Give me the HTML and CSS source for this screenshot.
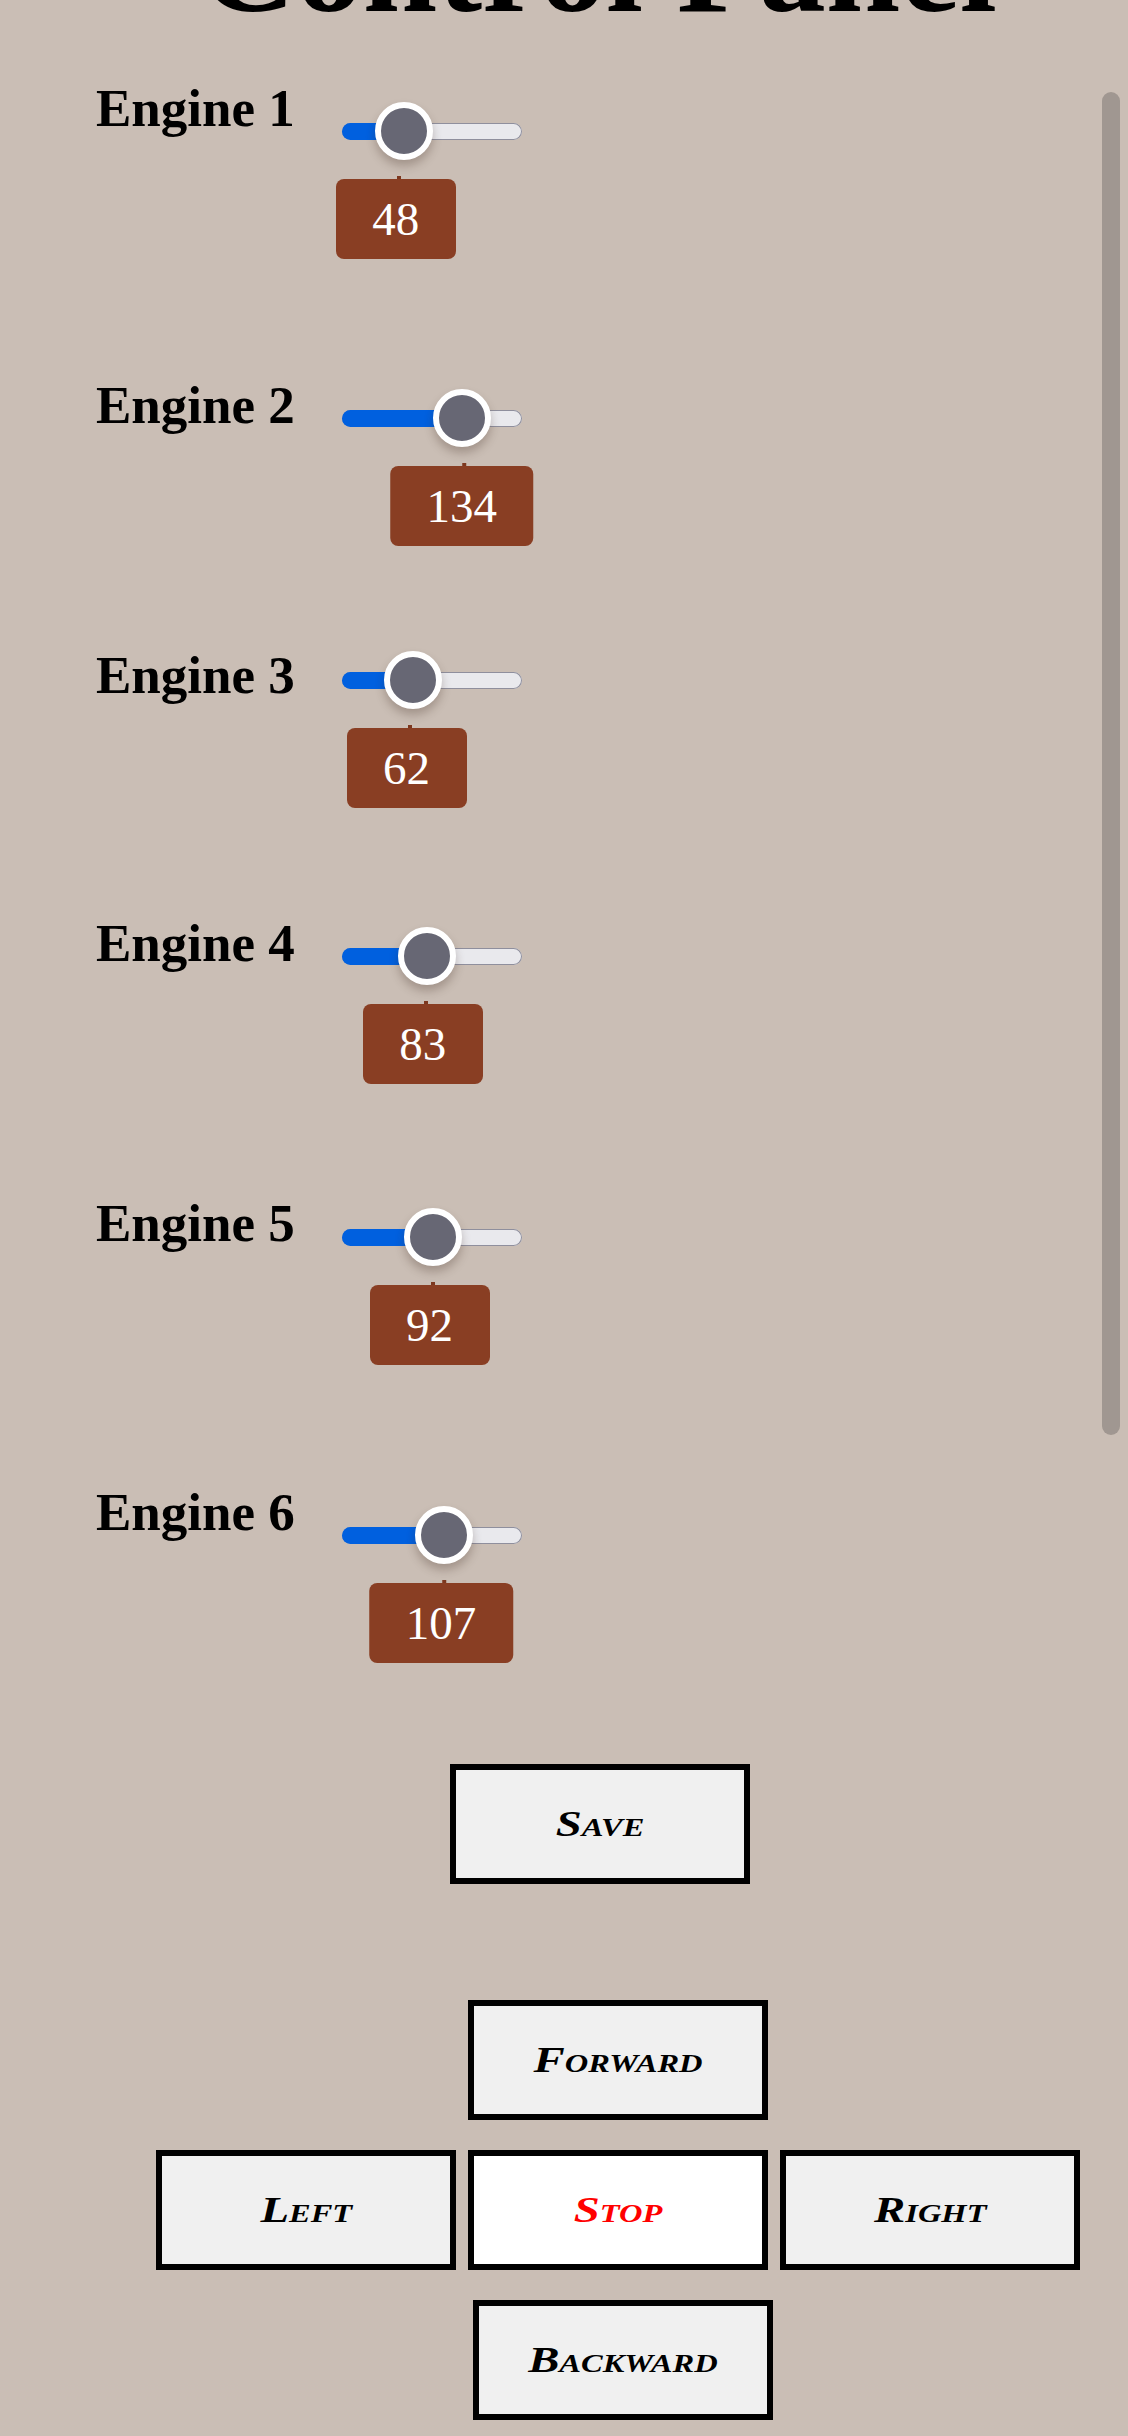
FILE: index.html
```html
<!DOCTYPE html>
<html lang="en">
<head>
<meta charset="utf-8">
<title>Control Panel</title>
<link rel="stylesheet" href="styles.css">
</head>
<body>
<h1 class="title">Control Panel</h1>

<section class="engines">
  <div class="engine">
    <h2 class="engine-label">Engine 1</h2>
    <div class="control" style="--p:0.2667">
      <div class="slider"><div class="track"><div class="fill"></div></div><div class="thumb"></div></div>
      <output class="bubble">48</output>
    </div>
  </div>
  <div class="engine">
    <h2 class="engine-label">Engine 2</h2>
    <div class="control" style="--p:0.7444">
      <div class="slider"><div class="track"><div class="fill"></div></div><div class="thumb"></div></div>
      <output class="bubble">134</output>
    </div>
  </div>
  <div class="engine">
    <h2 class="engine-label">Engine 3</h2>
    <div class="control" style="--p:0.3444">
      <div class="slider"><div class="track"><div class="fill"></div></div><div class="thumb"></div></div>
      <output class="bubble">62</output>
    </div>
  </div>
  <div class="engine">
    <h2 class="engine-label">Engine 4</h2>
    <div class="control" style="--p:0.4611">
      <div class="slider"><div class="track"><div class="fill"></div></div><div class="thumb"></div></div>
      <output class="bubble">83</output>
    </div>
  </div>
  <div class="engine">
    <h2 class="engine-label">Engine 5</h2>
    <div class="control" style="--p:0.5111">
      <div class="slider"><div class="track"><div class="fill"></div></div><div class="thumb"></div></div>
      <output class="bubble">92</output>
    </div>
  </div>
  <div class="engine">
    <h2 class="engine-label">Engine 6</h2>
    <div class="control" style="--p:0.5944">
      <div class="slider"><div class="track"><div class="fill"></div></div><div class="thumb"></div></div>
      <output class="bubble">107</output>
    </div>
  </div>
</section>

<div class="save-row">
  <button class="btn"><span class="btn-text">Save</span></button>
</div>

<div class="pad">
  <button class="btn forward"><span class="btn-text">Forward</span></button>
  <button class="btn left"><span class="btn-text">Left</span></button>
  <button class="btn stop"><span class="btn-text">Stop</span></button>
  <button class="btn right"><span class="btn-text">Right</span></button>
  <button class="btn backward"><span class="btn-text">Backward</span></button>
</div>

<div class="scroll-thumb"></div>
</body>
</html>
```

FILE: styles.css
```css
html, body {
  margin: 0;
  padding: 0;
}

body {
  background: #cabeb5;
  font-family: "Liberation Serif", "Times New Roman", serif;
  color: #000;
  overflow: hidden;
}

.title {
  margin: -101px 0 0 0;
  padding-left: 68px;
  font-size: 134px;
  line-height: 134px;
  font-weight: bold;
  text-align: center;
  white-space: nowrap;
}

.engines {
  padding-left: 96px;
}

.engine {
  display: flex;
  align-items: flex-start;
}

.engine:nth-child(1) { margin-top: 49px; }
.engine:nth-child(2) { margin-top: 120px; }
.engine:nth-child(3) { margin-top: 103px; }
.engine:nth-child(4) { margin-top: 109px; }
.engine:nth-child(5) { margin-top: 113px; }
.engine:nth-child(6) { margin-top: 121px; }

.engine:nth-child(1) .control { margin-top: 20px; }
.engine:nth-child(2) .control { margin-top: 10px; }
.engine:nth-child(3) .control { margin-top: 2px; }
.engine:nth-child(4) .control { margin-top: 10px; }
.engine:nth-child(5) .control { margin-top: 11px; }
.engine:nth-child(6) .control { margin-top: 20px; }

.engine-label {
  width: 246px;
  margin: 0;
  flex: none;
  font-size: 53px;
  line-height: 53px;
  font-weight: bold;
  white-space: nowrap;
}

.control {
  width: 180px;
  flex: none;
}

.slider {
  position: relative;
  height: 58px;
  display: flex;
  align-items: center;
}

.track {
  position: relative;
  width: 180px;
  height: 17px;
  border-radius: 9px;
  background: #e9e9ed;
  box-shadow: inset 0 0 0 1px #8f8f9d;
}

.fill {
  position: absolute;
  left: 0;
  top: 0;
  bottom: 0;
  width: calc(29px + var(--p) * 122px);
  border-radius: 9px;
  background: #0060df;
}

.thumb {
  position: absolute;
  top: 0;
  left: calc(var(--p) * 122px);
  width: 58px;
  height: 58px;
  box-sizing: border-box;
  border-radius: 50%;
  background: #676774;
  border: 6px solid #fff;
  box-shadow: 0 6px 10px rgba(60, 40, 30, 0.28);
}

.bubble {
  position: relative;
  display: inline-block;
  margin-top: 19px;
  left: calc(17px + var(--p) * 138px);
  transform: translateX(-50%);
  padding: 13px 36.5px;
  background: #893e23;
  color: #fff;
  font-size: 47px;
  line-height: normal;
  border-radius: 8px;
  white-space: nowrap;
}

.bubble::before {
  content: "";
  position: absolute;
  top: -3px;
  left: calc(50% + 1px);
  width: 4px;
  height: 3px;
  background: #7d381f;
}

.save-row {
  margin-top: 101px;
  padding-left: 450px;
}

.btn {
  display: flex;
  align-items: center;
  justify-content: center;
  width: 300px;
  height: 120px;
  box-sizing: border-box;
  margin: 0;
  padding: 0;
  border: 6px solid #000;
  border-radius: 0;
  background: #f0f0f0;
  color: #000;
  font-family: "Liberation Serif", "Times New Roman", serif;
  font-size: 36px;
  font-weight: bold;
  font-style: italic;
  font-variant: small-caps;
}

.btn-text {
  display: inline-block;
  transform: scaleX(1.3);
}

.pad {
  display: grid;
  grid-template-columns: 300px 300px 300px;
  column-gap: 12px;
  row-gap: 30px;
  margin-top: 116px;
  padding-left: 156px;
}

.forward { grid-column: 2; grid-row: 1; }
.left { grid-column: 1; grid-row: 2; }
.stop {
  grid-column: 2;
  grid-row: 2;
  background: #fff;
  color: #f00;
}
.right { grid-column: 3; grid-row: 2; }
.backward {
  grid-column: 2;
  grid-row: 3;
  margin-left: 5px;
}

.scroll-thumb {
  position: fixed;
  top: 92px;
  right: 8px;
  width: 18px;
  height: 1343px;
  border-radius: 9px;
  background: #a09791;
}
```
